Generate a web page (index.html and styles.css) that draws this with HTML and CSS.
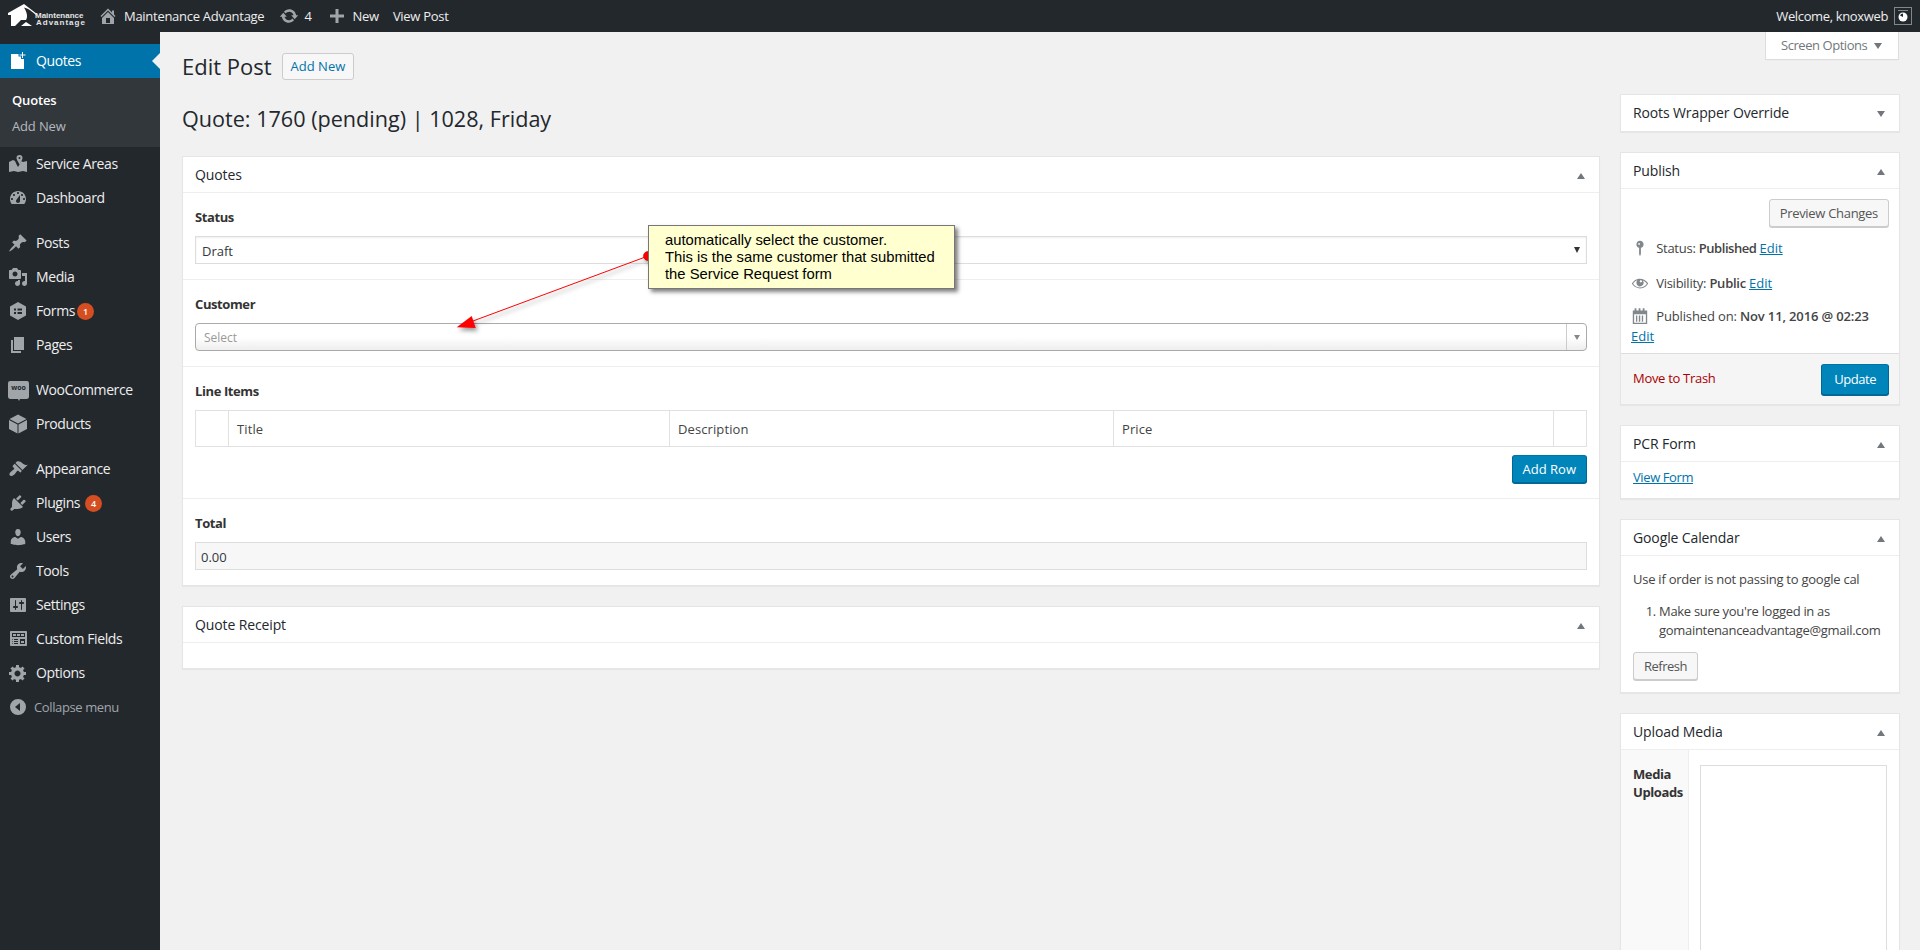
FILE: index.html
```html
<!DOCTYPE html>
<html lang="en">
<head>
<meta charset="utf-8">
<title>Edit Post</title>
<link rel="stylesheet" href="styles.css">
</head>
<body>
<header class="adminbar">
  <div class="logo">
    <svg class="logo-house" viewBox="0 0 30 24" width="30" height="24"><path d="M0 9 L16 0 L29 10 L29 12 C24 7 20 4.500 16 3.500 C19 8 20 13 18 16 L13 16 L7 22 L3 22 L3 11 L0 11Z"/><path d="M13 22 L18 18 L24 22Z"/></svg>
    <div class="logo-text"><span>Maintenance</span><span class="logo-adv">Advantage</span></div>
  </div>
  <div class="ab-item ab-site">
    <svg class="ab-icon" viewBox="0 0 20 20"><path d="M16 8.5l1.53 1.53-1.06 1.06L10 4.62l-6.47 6.47-1.06-1.06L10 2.5l4 4v-2h2v4zm-6-2.46l6 5.99V18H4v-5.97zM12 17v-5H8v5h4z"/></svg>
    <span>Maintenance Advantage</span>
  </div>
  <div class="ab-item">
    <svg class="ab-icon" viewBox="0 0 20 20"><path d="M10.2 3.28c3.53 0 6.43 2.61 6.92 6h2.08l-3.5 4-3.5-4h2.32c-.45-1.97-2.21-3.45-4.32-3.45-1.45 0-2.73.71-3.54 1.78L4.95 5.66C6.23 4.2 8.11 3.28 10.2 3.28zm-.4 13.44c-3.52 0-6.43-2.61-6.92-6H.8l3.5-4c1.17 1.33 2.33 2.67 3.5 4H5.48c.45 1.97 2.21 3.45 4.32 3.45 1.45 0 2.73-.71 3.54-1.78l1.71 1.95c-1.28 1.46-3.15 2.38-5.25 2.38z"/></svg>
    <span>4</span>
  </div>
  <div class="ab-item ab-new">
    <svg class="ab-icon" viewBox="0 0 20 20"><path d="M17 8.5v3h-5.5V17h-3v-5.5H3v-3h5.5V3h3v5.5z"/></svg>
    <span>New</span>
  </div>
  <div class="ab-item"><span>View Post</span></div>
  <div class="ab-account">
    <span>Welcome, knoxweb</span>
    <span class="avatar"><svg viewBox="0 0 16 16" width="16" height="16"><rect x="3" y="2" width="10" height="1" fill="#82878c"/><circle cx="8" cy="9" r="4.5" fill="#fff"/><path d="M8 9V5.5A3.5 3.5 0 0 0 5 7.5z" fill="#23282d"/></svg></span>
  </div>
</header>

<div class="layout">
  <nav class="sidebar">
    <div class="menu-item active">
      <svg class="menu-icon icon-white" viewBox="0 0 20 20"><path d="M3 3h10v3h3v12H3z"/><path class="icon-cut" d="M13 0h3v2.500h2.500v3H16v2.500h-3V5.500h-2.500v-3H13z" fill="#0073aa"/><path d="M14 1h1v2.500h2.500v1H15V7h-1V4.500h-2.500v-1H14z"/></svg>
      <span>Quotes</span>
    </div>
    <div class="submenu">
      <div class="sub-item current">Quotes</div>
      <div class="sub-item">Add New</div>
    </div>
    <div class="menu-item">
      <svg class="menu-icon" viewBox="0 0 20 20"><path d="M1 8l4-2 2 1 1.600 3.500L10 13l1.500-2.500L13 7l2 1 4-1v11l-4-1-5 1-4-1-5 1z"/><path fill-rule="evenodd" d="M11.500 1a3 3 0 0 1 3 3c0 2-2 4-3 6.500C10.500 8 8.500 6 8.500 4a3 3 0 0 1 3-3zm0 2a1 1 0 1 0 0 2 1 1 0 0 0 0-2z"/></svg>
      <span>Service Areas</span>
    </div>
    <div class="menu-item">
      <svg class="menu-icon" viewBox="0 0 20 20"><path d="M3.760 16h12.480c1.100-1.370 1.760-3.110 1.760-5 0-4.420-3.580-8-8-8s-8 3.580-8 8c0 1.890.66 3.630 1.760 5zM10 4c.55 0 1 .45 1 1s-.45 1-1 1-1-.45-1-1 .45-1 1-1zM6 6c.55 0 1 .45 1 1s-.45 1-1 1-1-.45-1-1 .45-1 1-1zm8 0c.55 0 1 .45 1 1s-.45 1-1 1-1-.45-1-1 .45-1 1-1zm-5.370 5.550L12 7v6c0 1.100-.9 2-2 2s-2-.9-2-2c0-.57.24-1.080.63-1.450zM4 10c.55 0 1 .45 1 1s-.45 1-1 1-1-.45-1-1 .45-1 1-1zm12 0c.55 0 1 .45 1 1s-.45 1-1 1-1-.45-1-1 .45-1 1-1z"/></svg>
      <span>Dashboard</span>
    </div>
    <div class="menu-item sep">
      <svg class="menu-icon" viewBox="0 0 20 20"><path d="M10.440 3.020l1.820-1.820 6.360 6.350-1.830 1.820c-1.050-.68-2.480-.57-3.410.36l-.75.75c-.92.93-1.040 2.350-.35 3.410l-1.830 1.820-2.410-2.410-2.800 2.790c-.42.42-3.380 2.710-3.800 2.290s1.860-3.390 2.280-3.810l2.790-2.790L4.100 9.360l1.830-1.820c1.050.69 2.480.57 3.400-.36l.75-.75c.93-.92 1.050-2.350.36-3.410z"/></svg>
      <span>Posts</span>
    </div>
    <div class="menu-item">
      <svg class="menu-icon" viewBox="0 0 20 20"><path d="M13 11V4c0-.55-.45-1-1-1h-1.670L9 1H5L3.670 3H2c-.55 0-1 .45-1 1v7c0 .55.45 1 1 1h10c.55 0 1-.45 1-1zM7 4.500c1.380 0 2.500 1.120 2.500 2.500S8.380 9.500 7 9.500 4.500 8.380 4.500 7 5.620 4.500 7 4.500zM14 6h5v10.500c0 1.380-1.120 2.500-2.500 2.500S14 17.880 14 16.500s1.120-2.500 2.500-2.500c.17 0 .34.02.5.05V9h-3V6zm-4 8.050V13h2v3.500c0 1.380-1.120 2.500-2.500 2.500S7 17.880 7 16.500 8.120 14 9.500 14c.17 0 .34.02.5.05z"/></svg>
      <span>Media</span>
    </div>
    <div class="menu-item">
      <svg class="menu-icon" viewBox="0 0 20 20"><path fill-rule="evenodd" d="M10 1l8 4.500v9L10 19l-8-4.500v-9zM6 7.500v2h2v-2zm3.500 0v2H14v-2zM6 11v2h2v-2zm3.500 0v2H14v-2z"/></svg>
      <span>Forms</span><span class="badge">1</span>
    </div>
    <div class="menu-item">
      <svg class="menu-icon" viewBox="0 0 20 20"><path d="M6 15V2h10v13H6zm-1 1h8v2H3V5h2v11z"/></svg>
      <span>Pages</span>
    </div>
    <div class="menu-item sep">
      <svg class="menu-icon menu-icon-wide" viewBox="0 0 20 20"><rect y="1" width="20" height="17" rx="2"/><path d="M9 17h3l-1.500 3z"/></svg>
      <span class="woo-mark">woo</span>
      <span class="woo-label">WooCommerce</span>
    </div>
    <div class="menu-item">
      <svg class="menu-icon" viewBox="0 0 20 20"><path d="M10 .5l8.500 4.500-8.500 4.500L1.500 5zM1 6l8.500 4.500V19.500L1 15zM19 6v9l-8.500 4.500v-9z"/></svg>
      <span>Products</span>
    </div>
    <div class="menu-item sep">
      <svg class="menu-icon" viewBox="0 0 20 20"><path d="M14.480 11.060L7.410 3.990l1.500-1.500c.5-.56 2.300-.47 3.510.32 1.210.8 1.430 1.280 2.910 2.100 1.180.64 2.450 1.260 4.450.85zm-.71.71L6.700 4.700 4.930 6.470c-.39.39-.39 1.020 0 1.410l1.060 1.060c.39.39.39 1.030 0 1.420-.6.6-1.430 1.110-2.210 1.690-.35.26-.7.53-1.010.84C1.430 13.710.96 15.650 1.910 16.600c.95.95 2.890.48 4.700-1.330.31-.31.58-.66.84-1.010.58-.78 1.090-1.610 1.690-2.210.39-.39 1.030-.39 1.420 0l1.060 1.060c.39.39 1.020.39 1.410 0z"/></svg>
      <span>Appearance</span>
    </div>
    <div class="menu-item">
      <svg class="menu-icon" viewBox="0 0 20 20"><path d="M13.110 4.360L9.870 7.600 8 5.730l3.240-3.240c.35-.34 1.050-.2 1.560.32.52.51.66 1.210.31 1.550zm-8 1.770l.91-1.120 9.010 9.010-1.190.84c-.71.71-2.630 1.160-3.820 1.160H6.140L4.900 17.260c-.59.59-1.540.59-2.120 0-.59-.58-.59-1.530 0-2.120l1.240-1.240v-3.880c0-1.130.4-3.190 1.090-3.890zm7.260 3.970l3.240-3.240c.34-.35 1.040-.21 1.550.31.52.51.66 1.210.31 1.550l-3.240 3.250z"/></svg>
      <span>Plugins</span><span class="badge badge-wide">4</span>
    </div>
    <div class="menu-item">
      <svg class="menu-icon" viewBox="0 0 20 20"><path d="M10 9.250c-2.270 0-2.730-3.440-2.730-3.440C7 4.020 7.820 2 9.970 2c2.160 0 2.980 2.020 2.710 3.810 0 0-.41 3.440-2.680 3.440zm0 2.570L12.720 10c2.390 0 4.520 2.330 4.520 4.530v2.490s-3.650 1.130-7.240 1.130c-3.650 0-7.240-1.130-7.240-1.130v-2.490c0-2.250 1.940-4.480 4.470-4.480z"/></svg>
      <span>Users</span>
    </div>
    <div class="menu-item">
      <svg class="menu-icon" viewBox="0 0 20 20"><path d="M16.680 9.770c-1.340 1.340-3.300 1.670-4.950.99l-5.410 6.520c-.99.99-2.590.99-3.580 0s-.99-2.59 0-3.570l6.520-5.420c-.68-1.650-.35-3.610.99-4.950 1.280-1.280 3.120-1.620 4.720-1.060l-2.890 2.890 2.820 2.820 2.860-2.870c.53 1.580.18 3.390-1.080 4.650zM3.810 16.210c.4.39 1.040.39 1.430 0 .4-.4.4-1.040 0-1.430-.39-.4-1.030-.4-1.430 0-.39.39-.39 1.030 0 1.430z"/></svg>
      <span>Tools</span>
    </div>
    <div class="menu-item">
      <svg class="menu-icon" viewBox="0 0 20 20"><path d="M18 16V4c0-.55-.45-1-1-1H3c-.55 0-1 .45-1 1v12c0 .55.45 1 1 1h14c.55 0 1-.45 1-1zM8 11h1c.55 0 1 .45 1 1s-.45 1-1 1H8v1.500c0 .28-.22.5-.5.5s-.5-.22-.5-.5V13H6c-.55 0-1-.45-1-1s.45-1 1-1h1V5.500c0-.28.22-.5.5-.5s.5.22.5.5V11zm5-2h-1c-.55 0-1-.45-1-1s.45-1 1-1h1V5.500c0-.28.22-.5.5-.5s.5.22.5.5V7h1c.55 0 1 .45 1 1s-.45 1-1 1h-1v5.500c0 .28-.22.5-.5.5s-.5-.22-.5-.5V9z"/></svg>
      <span>Settings</span>
    </div>
    <div class="menu-item">
      <svg class="menu-icon" viewBox="0 0 20 20"><path d="M19 16V3c0-.55-.45-1-1-1H3c-.55 0-1 .45-1 1v13c0 .55.45 1 1 1h15c.55 0 1-.45 1-1zM4 4h13v4H4V4zm1 1v2h3V5H5zm4 0v2h3V5H9zm4 0v2h3V5h-3zm-8.500 5c.28 0 .5.22.5.5s-.22.5-.5.5-.5-.22-.5-.5.22-.5.5-.5zM6 10h4v1H6v-1zm6 0h5v5h-5v-5zm-7.500 2c.28 0 .5.22.5.5s-.22.5-.5.5-.5-.22-.5-.5.22-.5.5-.5zM6 12h4v1H6v-1zm7 0v2h3v-2h-3zm-8.500 2c.28 0 .5.22.5.5s-.22.5-.5.5-.5-.22-.5-.5.22-.5.5-.5zM6 14h4v1H6v-1z"/></svg>
      <span>Custom Fields</span>
    </div>
    <div class="menu-item">
      <svg class="menu-icon" viewBox="0 0 20 20"><path d="M18 12h-2.180c-.17.7-.44 1.350-.81 1.930l1.540 1.540-2.100 2.100-1.540-1.540c-.58.36-1.230.63-1.910.79V19H8v-2.180c-.68-.16-1.330-.43-1.910-.79l-1.540 1.540-2.120-2.120 1.540-1.540c-.36-.58-.63-1.230-.79-1.910H1V9.030h2.170c.16-.7.44-1.350.8-1.940L2.430 5.550l2.100-2.100 1.540 1.540c.58-.37 1.240-.64 1.930-.81V2h3v2.180c.68.16 1.330.43 1.910.79l1.540-1.540 2.120 2.120-1.540 1.540c.36.59.64 1.240.8 1.940H18V12zm-8.500 1.500c1.660 0 3-1.340 3-3s-1.340-3-3-3-3 1.340-3 3 1.340 3 3 3z"/></svg>
      <span>Options</span>
    </div>
    <div class="menu-item collapse">
      <svg class="collapse-icon" viewBox="0 0 16 16"><path fill-rule="evenodd" d="M8 0a8 8 0 1 1 0 16A8 8 0 0 1 8 0zm2 4L5 8l5 4z"/></svg>
      <span>Collapse menu</span>
    </div>
  </nav>

  <main class="content">
    <div class="col-main">
      <div class="head-row">
        <h1>Edit Post</h1>
        <a class="btn btn-outline">Add New</a>
      </div>
      <h2 class="post-title">Quote: 1760 (pending) | 1028, Friday</h2>

      <section class="panel">
        <div class="panel-head"><h3>Quotes</h3><i class="tri up"></i></div>
        <div class="field">
          <div class="label">Status</div>
          <div class="select">Draft<i class="select-arrow"></i></div>
        </div>
        <div class="field">
          <div class="label">Customer</div>
          <div class="select2"><span class="placeholder">Select</span><span class="select2-arrow"><i></i></span></div>
        </div>
        <div class="field">
          <div class="label">Line Items</div>
          <table class="items">
            <tr><th class="c-a"></th><th class="c-t">Title</th><th class="c-d">Description</th><th class="c-p">Price</th><th class="c-a"></th></tr>
          </table>
          <div class="row-end"><a class="btn btn-primary">Add Row</a></div>
        </div>
        <div class="field field-last">
          <div class="label">Total</div>
          <div class="input-total">0.00</div>
        </div>
      </section>

      <section class="panel panel-receipt">
        <div class="panel-head"><h3>Quote Receipt</h3><i class="tri up"></i></div>
        <div class="receipt-body"></div>
      </section>
    </div>

    <aside class="col-side">
      <div class="screen-row"><div class="screen-tab">Screen Options<i class="tri down dark"></i></div></div>

      <section class="panel side-panel">
        <div class="panel-head headonly"><h3>Roots Wrapper Override</h3><i class="tri down"></i></div>
      </section>

      <section class="panel side-panel">
        <div class="panel-head"><h3>Publish</h3><i class="tri up"></i></div>
        <div class="publish-body">
          <div class="row-end"><a class="btn btn-preview">Preview Changes</a></div>
          <div class="pub-row pub-status">
            <svg class="pub-icon" viewBox="0 0 20 20"><path fill-rule="evenodd" d="M14 6c0 1.860-1.280 3.410-3 3.860V16c0 1-1 3-1 3s-1-2-1-3V9.860c-1.720-.45-3-2-3-3.860 0-2.210 1.790-4 4-4s4 1.790 4 4zM9 4.500a1 1 0 1 0 0 2 1 1 0 0 0 0-2z"/></svg>
            Status: <b class="tight">Published</b> <a class="link">Edit</a>
          </div>
          <div class="pub-row pub-vis">
            <svg class="pub-icon" viewBox="0 0 20 20"><path d="M18.300 9.500C15 4.900 8.500 3.800 3.900 7.200c-1.200.9-2.200 2.100-3 3.400.2.4.5.8.8 1.200 3.300 4.600 9.600 5.600 14.200 2.400.9-.7 1.800-1.500 2.400-2.400.3-.4.6-.8.8-1.200-.3-.4-.5-.8-.8-1.100zm-8.200-2.300c.5-.5 1.300-.5 1.800 0s.5 1.300 0 1.800-1.300.5-1.800 0c-.5-.4-.5-1.300 0-1.800zm-.1 7.700c-3.100 0-6-1.600-7.700-4.200C3.500 9 5.100 7.800 7 7c-.7.8-1 1.700-1 2.700 0 2.200 1.700 4.100 4 4.100 2.200 0 4.100-1.700 4.100-4 0-1-.4-2-1.100-2.700 1.900.8 3.500 2 4.700 3.700-1.700 2.600-4.600 4.100-7.700 4.100z"/></svg>
            Visibility: <b>Public</b> <a class="link">Edit</a>
          </div>
          <div class="pub-row pub-date">
            <svg class="pub-icon" viewBox="0 0 20 20"><path fill-rule="evenodd" d="M2 4h2V1.500h2V4h2.500V1.500h2V4H13V1.500h2V4h3v15H2zm1.500 4v9.500h13V8zM5.500 9.500H7v7H5.500zm3.200 0h1.600v7H8.700zm3.300 0h1.500v7H12z"/></svg>
            Published on: <b>Nov 11, 2016 @ 02:23</b> <a class="link">Edit</a>
          </div>
        </div>
        <div class="publish-foot">
          <a class="trash">Move to Trash</a>
          <a class="btn btn-primary btn-update">Update</a>
        </div>
      </section>

      <section class="panel side-panel">
        <div class="panel-head"><h3>PCR Form</h3><i class="tri up"></i></div>
        <div class="pcr-body"><a class="link">View Form</a></div>
      </section>

      <section class="panel side-panel">
        <div class="panel-head"><h3>Google Calendar</h3><i class="tri up"></i></div>
        <div class="cal-body">
          <p>Use if order is not passing to google cal</p>
          <ol>
            <li>Make sure you're logged in as gomaintenanceadvantage@gmail.com</li>
          </ol>
          <a class="btn btn-refresh">Refresh</a>
        </div>
      </section>

      <section class="panel side-panel">
        <div class="panel-head"><h3>Upload Media</h3><i class="tri up"></i></div>
        <div class="upload-body">
          <div class="upload-label">Media Uploads</div>
          <div class="upload-main"><div class="upload-box"></div></div>
        </div>
      </section>
    </aside>

    <div class="annotation">
      <svg class="anno-arrow" width="240" height="130" viewBox="0 0 240 130">
        <line class="anno-line" x1="200" y1="31" x2="25" y2="96"/>
        <path class="anno-head" d="M8.700 102.300 L23.700 91 L27.700 103Z"/>
        <circle class="anno-dot" cx="200" cy="31" r="4.500"/>
      </svg>
      <div class="note">automatically select the customer.<br>This is the same customer that submitted<br>the Service Request form</div>
    </div>
  </main>
</div>
</body>
</html>
```

FILE: styles.css
```css
* { box-sizing: border-box; }
html, body { margin: 0; height: 950px; overflow: hidden; }
body {
  background: #f1f1f1;
  color: #444;
  font-family: "Open Sans", "Noto Sans", sans-serif;
  font-size: 13px;
  line-height: 1.4;
}
h1, h2, h3, p, ol { margin: 0; padding: 0; }
a { text-decoration: none; }

/* admin bar */
.adminbar {
  display: flex;
  align-items: center;
  height: 32px;
  background: #23282d;
  color: #eee;
  font-size: 13px;
  letter-spacing: -.28px;
}
.logo { display: flex; align-items: center; width: 92px; padding-left: 8px; flex: none; }
.logo-house { fill: #fff; flex: none; }
.logo-text {
  display: flex;
  flex-direction: column;
  margin-left: -3px;
  margin-top: 5px;
  color: #e4e4e4;
  font-family: "Liberation Sans", sans-serif;
  font-size: 8px;
  font-weight: bold;
  line-height: 7px;
  letter-spacing: 0;
}
.logo-text .logo-adv { letter-spacing: 1px; margin-left: 1px; }
.ab-item { display: flex; align-items: center; margin-right: 15px; gap: 5px; }
.ab-site { margin-left: 6px; gap: 6px; }
.ab-new { gap: 6px; margin-right: 14px; }
.ab-icon { width: 20px; height: 20px; fill: #a0a5aa; flex: none; }
.ab-account { margin-left: auto; display: flex; align-items: center; gap: 6px; padding-right: 8px; letter-spacing: -.36px; }
.avatar {
  display: flex;
  width: 18px;
  height: 18px;
  border: 1px solid #82878c;
  background: #23282d;
}

/* layout */
.layout { display: flex; height: 918px; }
.sidebar {
  width: 160px;
  flex: none;
  background: #23282d;
  padding-top: 12px;
  color: #eee;
  font-size: 14px;
  letter-spacing: -.4px;
}
.menu-item {
  position: relative;
  display: flex;
  align-items: center;
  height: 34px;
  padding-left: 8px;
}
.menu-item.sep { margin-top: 11px; }
.menu-icon { width: 20px; height: 20px; fill: #a0a5aa; margin-right: 8px; flex: none; }
.menu-icon-wide { width: 21px; height: 21px; margin-right: 7px; }
.menu-item.active { background: #0073aa; color: #fff; }
.menu-item.active::after {
  content: "";
  position: absolute;
  right: 0;
  top: 9px;
  border: 8px solid transparent;
  border-right-color: #f1f1f1;
}
.icon-white { fill: #fff; }
.submenu {
  background: #32373c;
  padding: 9px 0 8px;
  height: 69px;
  font-size: 13px;
  letter-spacing: -.15px;
  color: #b4b9be;
}
.sub-item { height: 26px; line-height: 26px; padding-left: 12px; }
.sub-item.current { color: #fff; font-weight: 600; }
.badge {
  width: 17px;
  height: 17px;
  margin-left: 2px;
  border-radius: 50%;
  background: #d54e21;
  color: #fff;
  font-size: 9px;
  font-weight: 600;
  line-height: 17px;
  text-align: center;
  letter-spacing: 0;
}
.badge-wide { margin-left: 5px; }
.woo-mark {
  position: absolute;
  left: 8px;
  top: 8px;
  width: 21px;
  text-align: center;
  color: #23282d;
  font-size: 7px;
  font-weight: 700;
  line-height: 14px;
  letter-spacing: 0;
}
.collapse { color: #a0a5aa; font-size: 13px; padding-left: 10px; letter-spacing: -.38px; }
.collapse-icon { width: 16px; height: 16px; fill: #a0a5aa; margin-right: 8px; }

/* content */
.content {
  position: relative;
  flex: 1;
  display: flex;
  gap: 20px;
  padding: 0 20px 0 22px;
  min-width: 0;
}
.col-main { flex: 1; min-width: 0; }
.col-side { width: 280px; flex: none; }

.head-row { display: flex; align-items: center; padding-top: 21px; height: 48px; }
h1 { font-size: 22px; font-weight: 400; color: #23282d; line-height: 27px; }
.post-title {
  font-size: 21.6px;
  font-weight: 400;
  color: #23282d;
  line-height: 29px;
  margin-top: 24px;
  margin-bottom: 23px;
}

.btn {
  display: inline-block;
  height: 28px;
  line-height: 26px;
  padding: 0 10px;
  border: 1px solid #ccc;
  border-radius: 3px;
  background: #f7f7f7;
  box-shadow: 0 1px 0 #ccc;
  color: #555;
  font-size: 13px;
  white-space: nowrap;
}
.btn-outline {
  margin-left: 10px;
  height: 27px;
  line-height: 25px;
  padding: 0 8px;
  color: #0073aa;
  box-shadow: none;
}
.btn-preview { letter-spacing: -.3px; }
.btn-refresh { letter-spacing: -.5px; }
.btn-primary {
  background: #0085ba;
  border-color: #0073aa #006799 #006799;
  box-shadow: 0 1px 0 #006799;
  color: #fff;
}
.btn-update { height: 31px; line-height: 28px; padding: 0 12px; letter-spacing: -.45px; }

.panel {
  background: #fff;
  border: 1px solid #e5e5e5;
  box-shadow: 0 1px 1px rgba(0, 0, 0, .04);
}
.panel-receipt { margin-top: 20px; }
.side-panel { margin-bottom: 20px; }
.panel-head {
  display: flex;
  align-items: center;
  justify-content: space-between;
  height: 36px;
  padding: 0 12px;
  border-bottom: 1px solid #eee;
}
.col-main .panel-head { padding-top: 1px; }
.panel-head.headonly { border-bottom: 0; }
h3 { font-size: 14px; font-weight: 400; color: #23282d; line-height: 1.4; letter-spacing: -.12px; }
.tri { width: 0; height: 0; border: 4px solid transparent; margin: 2px 2px 0 0; }
.tri.up { border-bottom: 6px solid #72777c; border-top: 0; }
.tri.down { border-top: 6px solid #72777c; border-bottom: 0; }

.field { padding: 15px 12px; border-bottom: 1px solid #eee; }
.field-last { border-bottom: 0; }
.label { font-weight: 700; color: #333; line-height: 18px; margin-bottom: 10px; letter-spacing: -.4px; }
.select {
  position: relative;
  height: 28px;
  line-height: 26px;
  padding: 1px 0 0 6px;
  border: 1px solid #ddd;
  box-shadow: inset 0 1px 2px rgba(0, 0, 0, .07);
  color: #32373c;
}
.select-arrow {
  position: absolute;
  right: 6px;
  top: 10px;
  width: 0;
  height: 0;
  border: 3px solid transparent;
  border-top: 6px solid #333;
  border-bottom: 0;
}
.select2 {
  display: flex;
  height: 28px;
  border: 1px solid #aaa;
  border-radius: 4px;
  background: linear-gradient(#fff 50%, #eee);
  line-height: 27px;
  font-size: 12px;
}
.placeholder { flex: 1; padding-left: 8px; color: #999; }
.select2-arrow {
  display: flex;
  align-items: center;
  justify-content: center;
  width: 20px;
  border-left: 1px solid #ccc;
}
.select2-arrow i {
  width: 0;
  height: 0;
  border: 3px solid transparent;
  border-top: 5px solid #888;
  border-bottom: 0;
}
.items { width: 100%; border-collapse: collapse; table-layout: fixed; }
.items th {
  height: 36px;
  padding: 1px 8px 0;
  border: 1px solid #e1e1e1;
  font-weight: 400;
  text-align: left;
  color: #444;
  letter-spacing: .1px;
}
.c-a { width: 33px; }
.c-t { width: 441px; }
.c-d { width: 444px; }
.c-p { width: 440px; }
.row-end { display: flex; justify-content: flex-end; margin-top: 8px; }
.publish-body .row-end { margin-top: 0; }
.input-total {
  height: 28px;
  line-height: 26px;
  padding: 1px 0 0 5px;
  border: 1px solid #ddd;
  background: #f7f7f7;
  color: #32373c;
}
.receipt-body { height: 25px; }

/* side */
.screen-row { display: flex; justify-content: flex-end; height: 28px; margin-bottom: 34px; padding-right: 1px; }
.screen-tab {
  display: flex;
  align-items: center;
  gap: 7px;
  width: 134px;
  padding-left: 15px;
  background: #fff;
  border: 1px solid #ddd;
  border-top: 0;
  box-shadow: 0 1px 1px -1px rgba(0, 0, 0, .1);
  color: #72777c;
  letter-spacing: -.45px;
}
.tri.dark { margin: 0; }
.publish-body { padding: 10px 10px 7px; }
.pub-row { line-height: 20px; color: #444; letter-spacing: -.25px; }
.pub-row b { font-weight: 600; }
.pub-row b.tight { letter-spacing: -.45px; }
.pub-status { margin-top: 11px; }
.pub-vis { margin-top: 15px; }
.pub-date { margin-top: 13px; letter-spacing: -.14px; }
.pub-icon {
  display: inline-block;
  width: 18px;
  height: 18px;
  fill: #82878c;
  margin-right: 4px;
  vertical-align: -4px;
}
.link { color: #0073aa; text-decoration: underline; letter-spacing: 0; }
.publish-foot {
  display: flex;
  align-items: flex-start;
  justify-content: space-between;
  height: 51px;
  padding: 10px 10px 0 12px;
  background: #f5f5f5;
  border-top: 1px solid #ddd;
}
.trash { color: #a00; line-height: 28px; letter-spacing: -.3px; }
.pcr-body { padding: 5px 12px 11px; line-height: 20px; letter-spacing: -.4px; }
.pcr-body .link { letter-spacing: inherit; }
.cal-body { padding: 13px 12px 12px; letter-spacing: -.25px; }
.cal-body p { line-height: 20px; }
.cal-body ol { margin: 13px 0 12px; padding-left: 26px; line-height: 19px; letter-spacing: -.3px; }
.upload-body { display: flex; }
.upload-label {
  width: 68px;
  height: 400px;
  padding: 15px 12px;
  background: #f9f9f9;
  border-right: 1px solid #eee;
  color: #333;
  font-weight: 700;
  line-height: 18px;
  letter-spacing: -.4px;
}
.upload-main { flex: 1; padding: 15px 12px 0 11px; }
.upload-box { height: 400px; border: 1px solid #ddd; }

/* annotation overlay */
.annotation { position: absolute; left: 0; top: 0; }
.anno-arrow {
  position: absolute;
  left: 288px;
  top: 193px;
  overflow: visible;
  filter: drop-shadow(2px 3px 2px rgba(0, 0, 0, .4));
}
.anno-line { stroke: #f00; stroke-width: 1; }
.anno-head { fill: #f00; }
.anno-dot { fill: #f00; stroke: #b00; stroke-width: .6; }
.note {
  position: absolute;
  left: 488px;
  top: 193px;
  width: 307px;
  height: 64px;
  padding: 6px 0 0 16px;
  background: #ffffd0;
  border: 1px solid #777;
  box-shadow: 3px 3px 4px rgba(0, 0, 0, .5);
  color: #000;
  font-family: "Liberation Sans", sans-serif;
  font-size: 14.8px;
  line-height: 17px;
  white-space: nowrap;
}
```
